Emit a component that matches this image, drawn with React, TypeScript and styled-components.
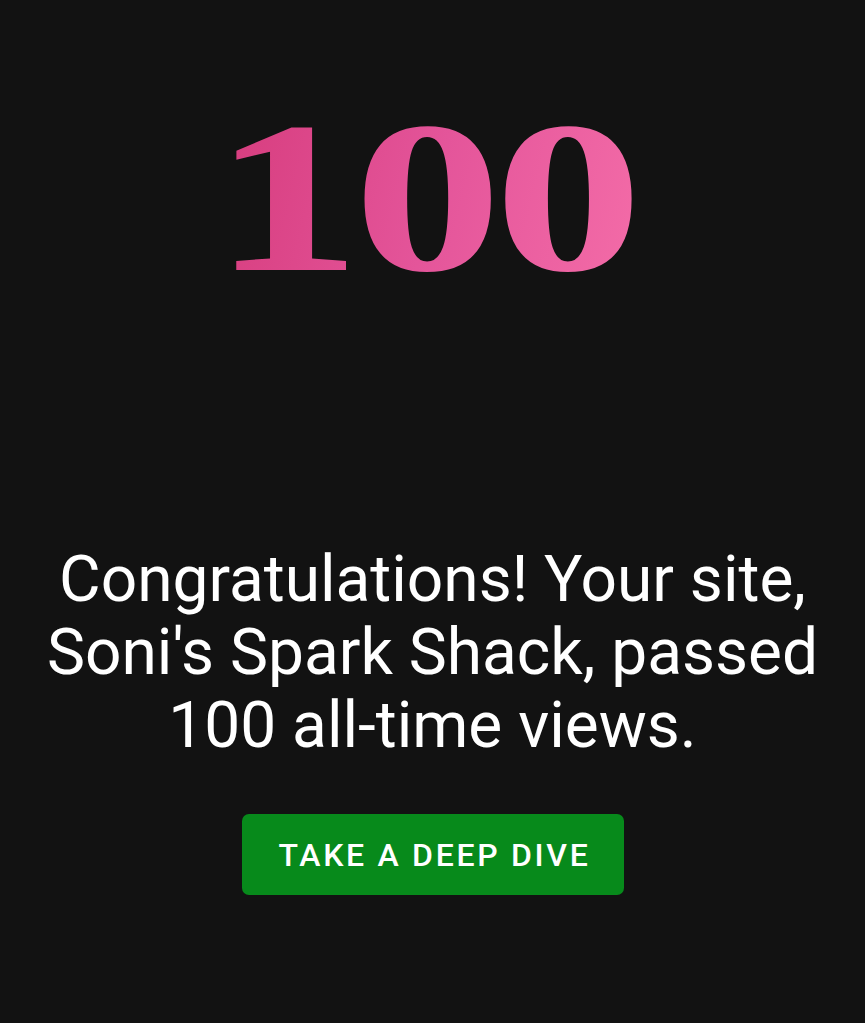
import React from "react";
import styled, { createGlobalStyle } from "styled-components";

const Global = createGlobalStyle`
  html, body { margin: 0; padding: 0; background: #121212; }
  body { width: 865px; height: 1023px; overflow: hidden; }
`;

const Screen = styled.main`
  width: 865px;
  height: 1023px;
  background: #121212;
  display: flex;
  flex-direction: column;
  align-items: center;
`;

const Milestone = styled.div`
  margin-top: 90px;
  height: 227px;
  font-family: "Liberation Serif", "Times New Roman", serif;
  font-weight: 700;
  font-size: 216px;
  line-height: 1;
  letter-spacing: -6px;
  padding-right: 13px;
  background: linear-gradient(100deg, #d63b7c 0%, #e4559a 50%, #f56ea9 100%);
  -webkit-background-clip: text;
  background-clip: text;
  color: transparent;
  transform: scaleX(1.38);
  transform-origin: center;
`;

const Message = styled.p`
  margin: 226px 0 0;
  font-family: Roboto, "Noto Sans", sans-serif;
  font-size: 64px;
  line-height: 73px;
  color: #ffffff;
  text-align: center;
  width: 865px;
`;

const Action = styled.button`
  margin-top: 52px;
  width: 382px;
  height: 81px;
  border: none;
  border-radius: 7px;
  background: #078a1b;
  color: #ffffff;
  font-family: Roboto, "Noto Sans", sans-serif;
  font-weight: 500;
  font-size: 32px;
  letter-spacing: 2.7px;
  text-transform: uppercase;
  display: flex;
  align-items: center;
  justify-content: center;
  padding: 0 0 0 4px;
  cursor: pointer;
`;

export default function App() {
  return (
    <>
      <Global />
      <Screen>
        <Milestone>100</Milestone>
        <Message>
          Congratulations! Your site,
          <br />
          Soni's Spark Shack, passed
          <br />
          100 all-time views.
        </Message>
        <Action>Take a deep dive</Action>
      </Screen>
    </>
  );
}
